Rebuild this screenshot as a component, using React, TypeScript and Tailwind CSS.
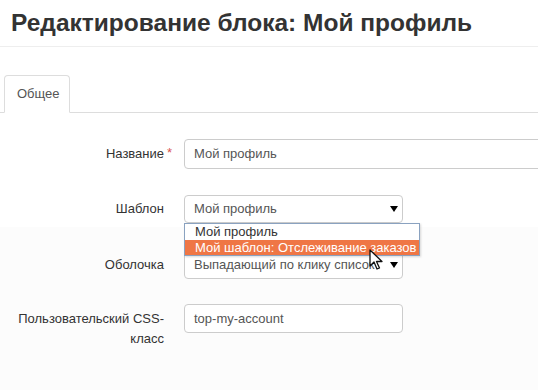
import React from "react";

function Arrow() {
  return (
    <svg width="8" height="6" viewBox="0 0 8 6" className="absolute right-[4px] top-1/2 -translate-y-1/2">
      <polygon points="0,0 8,0 4,6" fill="#000" />
    </svg>
  );
}

export default function App() {
  return (
    <div className="relative w-[538px] h-[390px] overflow-hidden bg-[linear-gradient(to_bottom,#ffffff_227px,#fcfcfc_227px)] text-[#333] font-[Liberation_Sans,Arial,sans-serif]">
      <div className="h-[47px] border-b border-[#eee] pl-[11px] pt-[8px]">
        <h1 className="text-[24.5px] leading-[30px] font-bold text-[#333]">Редактирование блока: Мой профиль</h1>
      </div>
      <div className="mt-[28px] flex border-b border-[#ddd] pl-[4px]">
        <div className="-mb-px h-[38px] w-[66px] rounded-t-[4px] border border-[#ddd] border-b-transparent bg-white pl-[12px] text-[13px] leading-[36px] text-[#555]">
          Общее
        </div>
      </div>

      <div className="mt-[26px] flex flex-col text-[13px]">
        <div className="flex items-start gap-[20px]">
          <div className="w-[164px] shrink-0 pt-[5px] text-right leading-[20px]">
            <span className="relative">
              Название
              <span className="absolute left-full top-[-3px] ml-[3px] text-[#d9534f]">*</span>
            </span>
          </div>
          <div className="h-[30px] w-[420px] shrink-0 rounded-[4px] border border-[#ccc] bg-white pl-[9px] leading-[28px] text-[#555]">
            Мой профиль
          </div>
        </div>

        <div className="mt-[26px] flex items-start gap-[20px]">
          <div className="w-[164px] shrink-0 pt-[4px] text-right leading-[20px]">Шаблон</div>
          <div className="relative z-10 h-[28px] w-[219px] shrink-0 rounded-[4px] border border-[#ccc] bg-white pl-[9px] leading-[26px] text-[#555]">
            Мой профиль
            <Arrow />
            <div className="absolute left-[-1px] top-[27px] w-[236px] border border-[#8aa2c0] bg-white text-[13px] leading-[15px] shadow-[1px_1px_2px_rgba(0,0,0,0.15)]">
              <div className="h-[16px] pl-[10px] text-[#333]">Мой профиль</div>
              <div className="h-[15px] bg-[#ef7645] pl-[10px] text-white">Мой шаблон: Отслеживание заказов</div>
            </div>
          </div>
        </div>

        <div className="mt-[28px] flex items-start gap-[20px]">
          <div className="w-[164px] shrink-0 pt-[4px] text-right leading-[20px]">Оболочка</div>
          <div className="relative h-[28px] w-[219px] shrink-0 rounded-[4px] border border-[#ccc] bg-white pl-[9px] leading-[26px] text-[#555]">
            Выпадающий по клику список
            <Arrow />
          </div>
        </div>

        <div className="mt-[25px] flex items-start gap-[20px]">
          <div className="w-[164px] shrink-0 pt-[5px] text-right leading-[20px]">
            Пользовательский CSS-
            <br />
            класс
          </div>
          <div className="h-[29px] w-[219px] shrink-0 rounded-[4px] border border-[#ccc] bg-white pl-[9px] leading-[27px] text-[#555]">
            top-my-account
          </div>
        </div>
      </div>

      <svg className="absolute left-[369px] top-[249px] z-20" width="14" height="22" viewBox="0 0 14 22">
        <path d="M1 1 L1 17 L5 13 L8 20 L10.5 19 L7.5 12.5 L13 12.5 Z" fill="#fff" stroke="#111" strokeWidth="1.3" strokeLinejoin="round" />
      </svg>
    </div>
  );
}
